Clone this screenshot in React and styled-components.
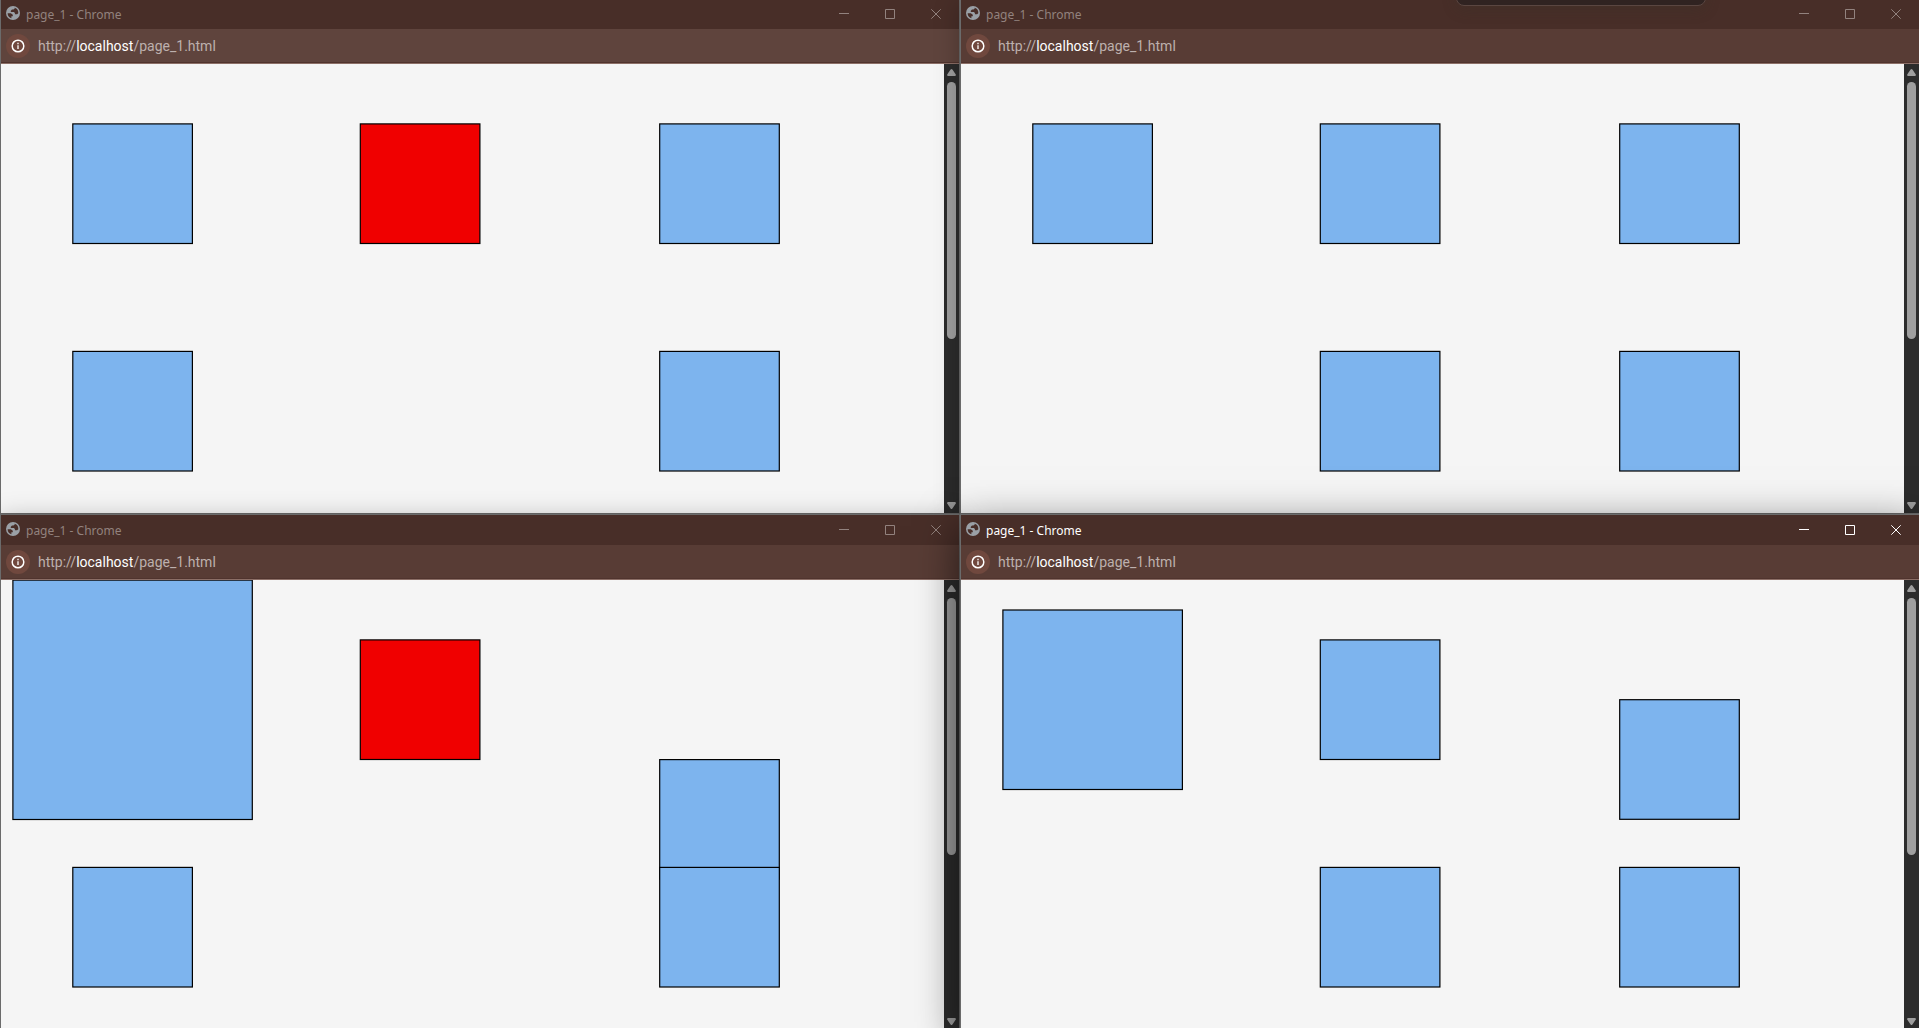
import React from "react";
import styled, { createGlobalStyle } from "styled-components";

const GlobalStyle = createGlobalStyle`
  * { box-sizing: border-box; }
  html, body, #root { height: 100%; }
  body { margin: 0; overflow: hidden; background: #202020; }
`;

const Desktop = styled.main`
  position: relative;
  height: 100%;
  overflow: hidden;
  font-family: "Noto Sans", sans-serif;
`;

const Tiles = styled.div`
  display: grid;
  grid-template-columns: 1fr 1fr;
  grid-template-rows: 1fr 1fr;
  width: calc(100% + 1px);
  height: calc(100% + 4px);
  margin-top: -2px;
`;

const Frame = styled.section`
  display: flex;
  flex-direction: column;
  min-width: 0;
  min-height: 0;
  position: relative;
  z-index: ${(p) => (p.$active ? 2 : 1)};
  border: 1px solid #6b6b6b;
  box-shadow: ${(p) =>
    p.$active ? "0 12px 40px rgba(0,0,0,.6)" : "0 4px 24px rgba(0,0,0,.26)"};
`;

const TitleBar = styled.header`
  display: flex;
  align-items: center;
  flex: none;
  height: 30px;
  padding-left: 5px;
  background: #482e28;
  color: ${(p) => (p.$active ? "#ffffff" : "#92827e")};
`;

const Favicon = styled.svg`
  flex: none;
  width: 14px;
  height: 14px;
  margin-bottom: 2px;
`;

const Title = styled.h1`
  flex: 1;
  margin: 0 0 0 6px;
  padding-top: 2px;
  font-size: 12px;
  line-height: 16px;
  font-weight: 400;
`;

const WindowButton = styled.button`
  display: flex;
  align-items: center;
  justify-content: center;
  width: 46px;
  height: 30px;
  padding: 0;
  border: 0;
  background: none;
  color: inherit;
`;

const AddressBar = styled.div`
  display: flex;
  align-items: center;
  flex: none;
  gap: 8px;
  height: 35px;
  padding: 0 5px;
  background: ${(p) => (p.$light ? "#5f443d" : "#583c35")};
  border-bottom: 1px solid #8c6f67;
  box-shadow: inset 0 -1px #50342e;
`;

const InfoButton = styled.button`
  display: flex;
  align-items: center;
  justify-content: center;
  width: 24px;
  height: 24px;
  padding: 0;
  border: 0;
  border-radius: 50%;
  background: #70483e;
  color: #ffffff;
`;

const Address = styled.a`
  color: #bdb0ad;
  font-family: Roboto, sans-serif;
  font-size: 14px;
  line-height: 20px;
  text-decoration: none;
`;

const Host = styled.span`
  color: #ffffff;
`;

const Viewport = styled.div`
  display: flex;
  flex: 1;
  min-height: 0;
  background: #f5f5f5;
`;

const Canvas = styled.svg`
  flex: 1;
  min-width: 0;
  height: 100%;
`;

const ScrollTrack = styled.div`
  display: flex;
  flex-direction: column;
  align-items: center;
  justify-content: space-between;
  flex: none;
  width: 15px;
  padding: 5px 0 4px;
  background: #2c2c2c;
`;

const Arrow = styled.svg`
  flex: none;
  width: 9px;
  height: 7px;
  fill: #9f9f9f;
`;

const Rail = styled.div`
  flex: 1;
  width: 9px;
  padding: 6px 0;
`;

const Thumb = styled.div`
  height: 62%;
  border-radius: 5px;
  background: #9f9f9f;
`;

const Flyout = styled.div`
  position: absolute;
  z-index: 3;
  top: -35px;
  right: 213px;
  width: 250px;
  height: 41px;
  border: 1px solid #5a4641;
  border-radius: 8px;
  background: #302321;
  box-shadow: 0 4px 14px rgba(50, 50, 40, 0.25);
`;

function Globe() {
  return (
    <Favicon viewBox="0 0 14 14" aria-hidden="true">
      <circle cx="7" cy="7" r="7" fill="#9aa0a6" />
      <path
        d="M8.6 1.7v1.1L7.4 3.6H6L4.8 4.8v1.1h3.1l1 1v1.3h2.2l1.2-.9A5.4 5.4 0 0 0 8.6 1.7Z"
        fill="#482e28"
      />
      <path
        d="M1.6 7.2h3.2l2 1.6v1.4H5.4v2A5.5 5.5 0 0 1 1.6 7.2Z"
        fill="#482e28"
      />
    </Favicon>
  );
}

function Info() {
  return (
    <svg width="14" height="14" viewBox="0 0 14 14" fill="none" aria-hidden="true">
      <circle cx="7" cy="7" r="5.8" stroke="currentColor" strokeWidth="1.5" />
      <path d="M7 6.2V10M7 3.8v1.4" stroke="currentColor" strokeWidth="1.3" />
    </svg>
  );
}

const controls = [
  ["Minimize", "M0 4.5h10"],
  ["Maximize", "M.5 .5h9v9h-9z"],
  ["Close", "M.3 .3l9.4 9.4M9.7 .3L.3 9.7"],
];

function BrowserWindow({ active, light, shapes }) {
  return (
    <Frame $active={active}>
      <TitleBar $active={active}>
        <Globe />
        <Title>page_1 - Chrome</Title>
        {controls.map(([label, d]) => (
          <WindowButton key={label} type="button" aria-label={label}>
            <svg width="10" height="10" fill="none" stroke="currentColor">
              <path d={d} />
            </svg>
          </WindowButton>
        ))}
      </TitleBar>
      <AddressBar $light={light}>
        <InfoButton type="button" aria-label="View site information">
          <Info />
        </InfoButton>
        <Address href="http://localhost/page_1.html">
          http://<Host>localhost</Host>/page_1.html
        </Address>
      </AddressBar>
      <Viewport>
        <Canvas aria-label="Squares">
          {shapes.map(([x, y, size, fill = "#7db4ee"]) => (
            <rect
              key={`${x}-${y}`}
              x={x}
              y={y}
              width={size}
              height={size}
              fill={fill}
              stroke="#000"
              strokeWidth="1.2"
            />
          ))}
        </Canvas>
        <ScrollTrack>
          <Arrow viewBox="0 0 9 7">
            <path d="M3.6 .6Q4.5-.4 5.4 .6L8.8 5.6Q9 7 8 7H1Q0 7 .2 5.6Z" />
          </Arrow>
          <Rail>
            <Thumb />
          </Rail>
          <Arrow viewBox="0 0 9 7">
            <path d="M3.6 6.4Q4.5 7.4 5.4 6.4L8.8 1.4Q9 0 8 0H1Q0 0 .2 1.4Z" />
          </Arrow>
        </ScrollTrack>
      </Viewport>
    </Frame>
  );
}

const RED = "#f00000";
const SMALL = 119.6;

const windows = [
  {
    light: true,
    shapes: [
      [71.8, 59.9, SMALL],
      [359.3, 59.9, SMALL, RED],
      [658.7, 59.9, SMALL],
      [71.8, 287.4, SMALL],
      [658.7, 287.4, SMALL],
    ],
  },
  {
    shapes: [
      [71.8, 59.9, SMALL],
      [359.3, 59.9, SMALL],
      [658.7, 59.9, SMALL],
      [359.3, 287.4, SMALL],
      [658.7, 287.4, SMALL],
    ],
  },
  {
    shapes: [
      [11.9, 0.1, 239.4],
      [359.3, 59.9, SMALL, RED],
      [658.7, 179.6, SMALL],
      [71.8, 287.4, SMALL],
      [658.7, 287.4, SMALL],
    ],
  },
  {
    active: true,
    shapes: [
      [41.9, 30, 179.5],
      [359.3, 59.9, SMALL],
      [658.7, 119.7, SMALL],
      [359.3, 287.4, SMALL],
      [658.7, 287.4, SMALL],
    ],
  },
];

export default function App() {
  return (
    <Desktop>
      <GlobalStyle />
      <Tiles>
        {windows.map((w, i) => (
          <BrowserWindow key={i} {...w} />
        ))}
      </Tiles>
      <Flyout />
    </Desktop>
  );
}
